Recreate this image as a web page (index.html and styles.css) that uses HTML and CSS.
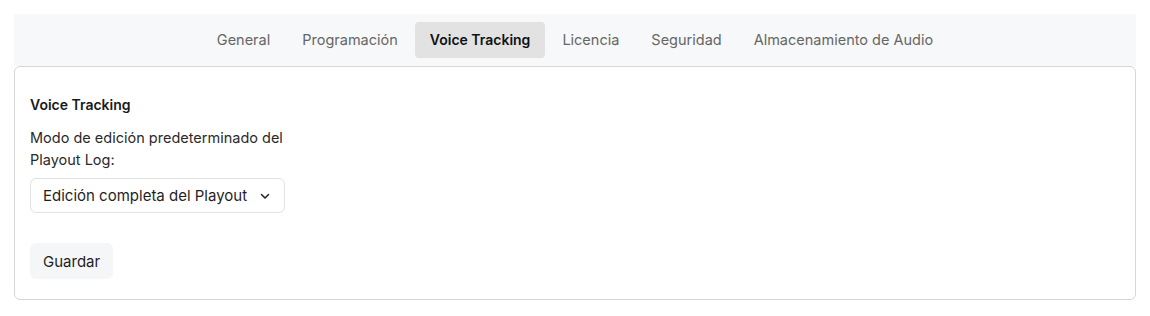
FILE: index.html
```html
<!DOCTYPE html>
<html lang="es">
<head>
    <meta charset="UTF-8">
    <title>Configuración - Voice Tracking</title>
    <link rel="stylesheet" href="styles.css">
</head>
<body>
    <nav class="tabs">
        <a class="tab">General</a>
        <a class="tab">Programación</a>
        <a class="tab active">Voice Tracking</a>
        <a class="tab">Licencia</a>
        <a class="tab">Seguridad</a>
        <a class="tab">Almacenamiento de Audio</a>
    </nav>

    <div class="card">
        <h3 class="card-title">Voice Tracking</h3>
        <div class="field">
            <label class="field-label">Modo de edición predeterminado del Playout Log:</label>
            <div class="select">
                <span>Edición completa del Playout</span>
                <svg width="12" height="12" viewBox="0 0 12 12" fill="none" stroke="#222" stroke-width="1.5" stroke-linecap="round" stroke-linejoin="round">
                    <path d="M2.5 4.5 6 8l3.5-3.5"/>
                </svg>
            </div>
        </div>
        <button class="btn">Guardar</button>
    </div>
</body>
</html>
```

FILE: styles.css
```css
body {
    margin: 14px;
    font-family: Inter, "Noto Sans", sans-serif;
    font-size: 14.5px;
    color: #1f1f1f;
}
.tabs {
    display: flex;
    justify-content: center;
    gap: 2px;
    padding: 8px;
    background-color: #f7f8f9;
}
.tab {
    display: flex;
    align-items: center;
    height: 36px;
    padding: 0 15px;
    border-radius: 4px;
    color: #666;
    line-height: 20px;
}
.tab.active {
    background-color: #e2e2e2;
    color: #111;
    font-size: 14px;
    font-weight: 600;
}
.card {
    border: 1px solid #d6d6d6;
    border-radius: 6px;
    padding: 28px 15px 20px;
}
.card-title {
    margin: 0 0 12px;
    font-size: 14px;
    font-weight: 600;
    line-height: 20px;
    color: #1a1a1a;
}
.field {
    width: 255px;
}
.field-label {
    display: block;
    line-height: 22px;
    color: #2a2a2a;
    margin-bottom: 7px;
}
.select {
    display: flex;
    align-items: center;
    justify-content: space-between;
    height: 33px;
    padding: 0 13px 0 12px;
    border: 1px solid #e2e2e2;
    border-radius: 6px;
    font-size: 15px;
    color: #1f1f1f;
}
.btn {
    margin-top: 30px;
    height: 36px;
    padding: 0 13px;
    border: none;
    border-radius: 6px;
    background-color: #f5f6f7;
    font-family: inherit;
    font-size: 15px;
    color: #1f1f1f;
}
```
